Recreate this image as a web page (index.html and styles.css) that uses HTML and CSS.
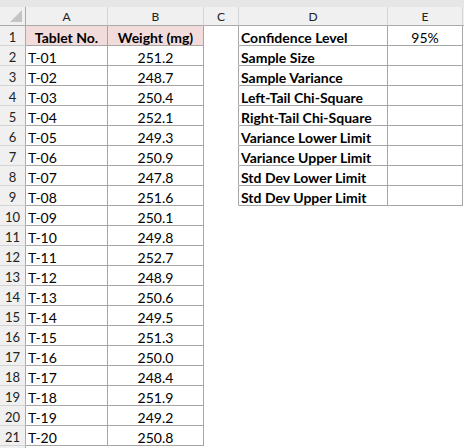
FILE: index.html
```html
<!DOCTYPE html>
<html>
<head>
<meta charset="utf-8">
<link rel="stylesheet" href="styles.css">
</head>
<body>
<div class="topband"></div>
<div class="grid">
  <div class="corner"><span class="tri"></span></div><div class="ch">A</div><div class="ch">B</div><div class="ch">C</div><div class="ch">D</div><div class="ch">E</div><div class="ch last"></div>

  <div class="rh">1</div><div class="b hd">Tablet No.</div><div class="b hd">Weight (mg)</div><div class="e edge"></div><div class="b lbl">Confidence Level</div><div class="b num">95%</div><div class="e"></div>
  <div class="rh">2</div><div class="b">T-01</div><div class="b num">251.2</div><div class="e edge"></div><div class="b lbl">Sample Size</div><div class="b"></div><div class="e"></div>
  <div class="rh">3</div><div class="b">T-02</div><div class="b num">248.7</div><div class="e edge"></div><div class="b lbl">Sample Variance</div><div class="b"></div><div class="e"></div>
  <div class="rh">4</div><div class="b">T-03</div><div class="b num">250.4</div><div class="e edge"></div><div class="b lbl">Left-Tail Chi-Square</div><div class="b"></div><div class="e"></div>
  <div class="rh">5</div><div class="b">T-04</div><div class="b num">252.1</div><div class="e edge"></div><div class="b lbl">Right-Tail Chi-Square</div><div class="b"></div><div class="e"></div>
  <div class="rh">6</div><div class="b">T-05</div><div class="b num">249.3</div><div class="e edge"></div><div class="b lbl">Variance Lower Limit</div><div class="b"></div><div class="e"></div>
  <div class="rh">7</div><div class="b">T-06</div><div class="b num">250.9</div><div class="e edge"></div><div class="b lbl">Variance Upper Limit</div><div class="b"></div><div class="e"></div>
  <div class="rh">8</div><div class="b">T-07</div><div class="b num">247.8</div><div class="e edge"></div><div class="b lbl">Std Dev Lower Limit</div><div class="b"></div><div class="e"></div>
  <div class="rh">9</div><div class="b">T-08</div><div class="b num">251.6</div><div class="e edge"></div><div class="b lbl">Std Dev Upper Limit</div><div class="b"></div><div class="e"></div>
  <div class="rh">10</div><div class="b">T-09</div><div class="b num">250.1</div><div class="e"></div><div class="e"></div><div class="e"></div><div class="e"></div>
  <div class="rh">11</div><div class="b">T-10</div><div class="b num">249.8</div><div class="e"></div><div class="e"></div><div class="e"></div><div class="e"></div>
  <div class="rh">12</div><div class="b">T-11</div><div class="b num">252.7</div><div class="e"></div><div class="e"></div><div class="e"></div><div class="e"></div>
  <div class="rh">13</div><div class="b">T-12</div><div class="b num">248.9</div><div class="e"></div><div class="e"></div><div class="e"></div><div class="e"></div>
  <div class="rh">14</div><div class="b">T-13</div><div class="b num">250.6</div><div class="e"></div><div class="e"></div><div class="e"></div><div class="e"></div>
  <div class="rh">15</div><div class="b">T-14</div><div class="b num">249.5</div><div class="e"></div><div class="e"></div><div class="e"></div><div class="e"></div>
  <div class="rh">16</div><div class="b">T-15</div><div class="b num">251.3</div><div class="e"></div><div class="e"></div><div class="e"></div><div class="e"></div>
  <div class="rh">17</div><div class="b">T-16</div><div class="b num">250.0</div><div class="e"></div><div class="e"></div><div class="e"></div><div class="e"></div>
  <div class="rh">18</div><div class="b">T-17</div><div class="b num">248.4</div><div class="e"></div><div class="e"></div><div class="e"></div><div class="e"></div>
  <div class="rh">19</div><div class="b">T-18</div><div class="b num">251.9</div><div class="e"></div><div class="e"></div><div class="e"></div><div class="e"></div>
  <div class="rh">20</div><div class="b">T-19</div><div class="b num">249.2</div><div class="e"></div><div class="e"></div><div class="e"></div><div class="e"></div>
  <div class="rh">21</div><div class="b">T-20</div><div class="b num">250.8</div><div class="e"></div><div class="e"></div><div class="e"></div><div class="e"></div>
  <div class="rh"></div><div class="e"></div><div class="e"></div><div class="e"></div><div class="e"></div><div class="e"></div><div class="e"></div>
</div>
</body>
</html>
```

FILE: styles.css
```css
html, body {
  margin: 0;
  padding: 0;
  background: #ffffff;
}

body {
  font-family: Lato, "Liberation Sans", sans-serif;
  color: #000000;
  overflow: hidden;
}

.topband {
  height: 7px;
  background: #e6e6e6;
}

.grid {
  display: grid;
  grid-template-columns: 26px 82px 96px 35px 149px 75px 1fr;
  grid-template-rows: 19px repeat(22, 20px);
}

.grid > div {
  box-sizing: border-box;
  border-right: 1px solid transparent;
  border-bottom: 1px solid transparent;
  font-size: 14px;
  line-height: 19px;
  padding: 2px 2px 0 2px;
  white-space: nowrap;
  overflow: hidden;
}

.grid > .corner {
  position: relative;
  background: #f0f0f0;
  border-right-color: #ababab;
  border-bottom-color: #ababab;
  padding: 0;
}

.tri {
  position: absolute;
  right: 3px;
  bottom: 3px;
  width: 0;
  height: 0;
  border-left: 12px solid transparent;
  border-bottom: 12px solid #c4c4c4;
}

.grid > .ch {
  background: #f0f0f0;
  border-right-color: #d4d4d4;
  border-bottom-color: #ababab;
  text-align: center;
  font-size: 12px;
  line-height: 17px;
  padding: 1px 0 0 0;
  color: #222222;
}

.grid > .ch.last {
  border-right-color: transparent;
}

.grid > .rh {
  background: #f0f0f0;
  border-right-color: #ababab;
  border-bottom-color: #d4d4d4;
  text-align: center;
  font-size: 13px;
  padding: 2px 0 0 0;
  color: #222222;
}

.grid > .b {
  border-right-color: #a6a6a6;
  border-bottom-color: #a6a6a6;
}

.grid > .edge {
  border-right-color: #a6a6a6;
}

.grid > .hd {
  background: #f2dcdb;
  font-weight: bold;
  text-align: center;
}

.grid > .num {
  text-align: center;
}

.grid > .lbl {
  font-weight: bold;
}
```
